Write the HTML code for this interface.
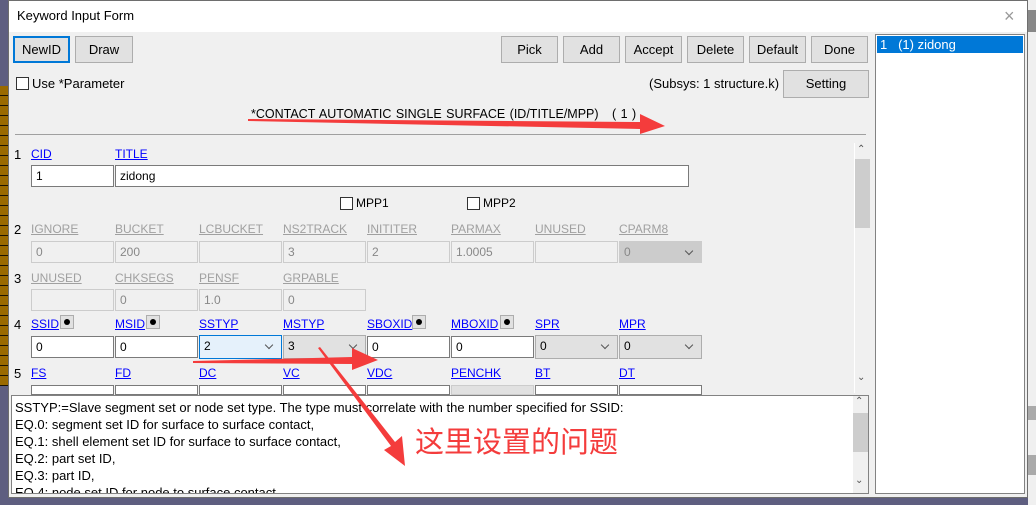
<!DOCTYPE html>
<html><head><meta charset="utf-8">
<style>
*{box-sizing:border-box;margin:0;padding:0}
body{width:1036px;height:505px;position:relative;overflow:hidden;background:#5e5e80;font-family:"Liberation Sans","Noto Sans CJK SC",sans-serif;font-size:12px;color:#000}
.a{position:absolute}
.win{left:8px;top:0;width:1020px;height:498px;background:#f0f0f0;border:1px solid #6e6e6e}
.btn{position:absolute;height:27px;background:#e1e1e1;border:1px solid #adadad;text-align:center;line-height:25px;font-size:13px}
.lbl{position:absolute;color:#0000ff;text-decoration:underline;font-size:12px}
.dis{color:#a0a0a0}
.inp{position:absolute;width:83px;height:22px;background:#fff;border:1px solid #7a7a7a;padding-left:4px;line-height:20px;font-size:12px}
.dinp{background:#f0f0f0;border-color:#ccc;color:#888}
.sel{position:absolute;width:83px;height:22px;background:#e1e1e1;border:1px solid #adadad;padding-left:4px;line-height:20px}
.sel:after{content:"";position:absolute;right:9px;top:6px;width:5px;height:5px;border-right:1px solid #555;border-bottom:1px solid #555;transform:rotate(45deg)}
.num{position:absolute;left:14px;font-size:13px}
.cb{position:absolute;width:13px;height:13px;border:1px solid #333;background:#fff}
.dot{position:absolute;width:14px;height:14px;background:#e1e1e1;border:1px solid #adadad}
.dot:after{content:"";position:absolute;left:3px;top:3px;width:6px;height:6px;border-radius:50%;background:#000}
.help div{height:17px;line-height:17px;font-size:13px;white-space:nowrap}
</style></head><body>
<div class="a" style="left:0;top:86px;width:8px;height:300px;background:repeating-linear-gradient(#9a6a00 0 9px,#1a1200 9px 10px)"></div>
<div class="a" style="left:1028px;top:0;width:8px;height:505px;background:#f0f0f0"></div>
<div class="a" style="left:1028px;top:10px;width:8px;height:22px;background:#888"></div>
<div class="a" style="left:1028px;top:406px;width:8px;height:14px;background:#aaa"></div>
<div class="a" style="left:1028px;top:455px;width:8px;height:20px;background:#aaa"></div>

<div class="a win">
 <div class="a" style="left:0;top:0;width:1018px;height:31px;background:#fff"></div>
 <div class="a" style="left:8px;top:7px;font-size:13px">Keyword Input Form</div>
 <div class="a" style="left:995px;top:5px;font-size:18px;color:#999">×</div>
</div>

<div class="btn" style="left:13px;top:36px;width:57px;border:2px solid #0078d7;line-height:23px">NewID</div>
<div class="btn" style="left:75px;top:36px;width:58px">Draw</div>
<div class="btn" style="left:501px;top:36px;width:57px">Pick</div>
<div class="btn" style="left:563px;top:36px;width:57px">Add</div>
<div class="btn" style="left:625px;top:36px;width:57px">Accept</div>
<div class="btn" style="left:687px;top:36px;width:57px">Delete</div>
<div class="btn" style="left:749px;top:36px;width:57px">Default</div>
<div class="btn" style="left:811px;top:36px;width:57px">Done</div>
<div class="btn" style="left:783px;top:70px;width:86px;height:28px;line-height:26px">Setting</div>
<div class="cb" style="left:16px;top:77px"></div>
<div class="a" style="left:32px;top:76px;font-size:13px">Use *Parameter</div>
<div class="a" style="left:649px;top:76px;font-size:13px">(Subsys: 1 structure.k)</div>
<div class="a" style="left:251px;top:107px;font-size:12.5px;word-spacing:1px">*CONTACT AUTOMATIC SINGLE SURFACE (ID/TITLE/MPP) &nbsp;&nbsp;( 1 )</div>
<div class="a" style="left:15px;top:134px;width:851px;height:1px;background:#a0a0a0"></div>

<div class="a" style="left:854px;top:143px;width:16px;height:250px;background:#f0f0f0;border-left:1px solid #fff"></div>
<div class="a" style="left:857px;top:144px;font-size:10px;color:#555">&#8963;</div>
<div class="a" style="left:855px;top:159px;width:15px;height:69px;background:#cdcdcd"></div>
<div class="a" style="left:857px;top:372px;font-size:10px;color:#555">&#8964;</div>

<div class="num" style="top:147px">1</div>
<div class="lbl" style="left:31px;top:147px">CID</div>
<div class="lbl" style="left:115px;top:147px">TITLE</div>
<div class="inp" style="left:31px;top:165px;width:83px;height:22px">1</div>
<div class="inp" style="left:115px;top:165px;width:574px;height:22px">zidong</div>
<div class="cb" style="left:340px;top:197px"></div><div class="a" style="left:356px;top:196px">MPP1</div>
<div class="cb" style="left:467px;top:197px"></div><div class="a" style="left:483px;top:196px">MPP2</div>

<div class="num" style="top:222px">2</div>
<div class="lbl dis" style="left:31px;top:222px">IGNORE</div>
<div class="lbl dis" style="left:115px;top:222px">BUCKET</div>
<div class="lbl dis" style="left:199px;top:222px">LCBUCKET</div>
<div class="lbl dis" style="left:283px;top:222px">NS2TRACK</div>
<div class="lbl dis" style="left:367px;top:222px">INITITER</div>
<div class="lbl dis" style="left:451px;top:222px">PARMAX</div>
<div class="lbl dis" style="left:535px;top:222px">UNUSED</div>
<div class="lbl dis" style="left:619px;top:222px">CPARM8</div>
<div class="inp dinp" style="left:31px;top:241px">0</div>
<div class="inp dinp" style="left:115px;top:241px">200</div>
<div class="inp dinp" style="left:199px;top:241px"></div>
<div class="inp dinp" style="left:283px;top:241px">3</div>
<div class="inp dinp" style="left:367px;top:241px">2</div>
<div class="inp dinp" style="left:451px;top:241px">1.0005</div>
<div class="inp dinp" style="left:535px;top:241px"></div>
<div class="sel" style="left:619px;top:241px;background:#ccc;border-color:#ccc;color:#888">0</div>

<div class="num" style="top:271px">3</div>
<div class="lbl dis" style="left:31px;top:271px">UNUSED</div>
<div class="lbl dis" style="left:115px;top:271px">CHKSEGS</div>
<div class="lbl dis" style="left:199px;top:271px">PENSF</div>
<div class="lbl dis" style="left:283px;top:271px">GRPABLE</div>
<div class="inp dinp" style="left:31px;top:289px"></div>
<div class="inp dinp" style="left:115px;top:289px">0</div>
<div class="inp dinp" style="left:199px;top:289px">1.0</div>
<div class="inp dinp" style="left:283px;top:289px">0</div>

<div class="num" style="top:317px">4</div>
<div class="lbl" style="left:31px;top:317px">SSID</div><div class="dot" style="left:60px;top:315px"></div>
<div class="lbl" style="left:115px;top:317px">MSID</div><div class="dot" style="left:146px;top:315px"></div>
<div class="lbl" style="left:199px;top:317px">SSTYP</div>
<div class="lbl" style="left:283px;top:317px">MSTYP</div>
<div class="lbl" style="left:367px;top:317px">SBOXID</div><div class="dot" style="left:412px;top:315px"></div>
<div class="lbl" style="left:451px;top:317px">MBOXID</div><div class="dot" style="left:500px;top:315px"></div>
<div class="lbl" style="left:535px;top:317px">SPR</div>
<div class="lbl" style="left:619px;top:317px">MPR</div>
<div class="inp" style="left:31px;top:336px">0</div>
<div class="inp" style="left:115px;top:336px">0</div>
<div class="sel" style="left:199px;top:335px;background:#e5f1fb;border-color:#0078d7;height:24px">2</div>
<div class="sel" style="left:283px;top:335px;height:24px">3</div>
<div class="inp" style="left:367px;top:336px">0</div>
<div class="inp" style="left:451px;top:336px">0</div>
<div class="sel" style="left:535px;top:335px;height:24px">0</div>
<div class="sel" style="left:619px;top:335px;height:24px">0</div>

<div class="num" style="top:366px">5</div>
<div class="lbl" style="left:31px;top:366px">FS</div>
<div class="lbl" style="left:115px;top:366px">FD</div>
<div class="lbl" style="left:199px;top:366px">DC</div>
<div class="lbl" style="left:283px;top:366px">VC</div>
<div class="lbl" style="left:367px;top:366px">VDC</div>
<div class="lbl" style="left:451px;top:366px">PENCHK</div>
<div class="lbl" style="left:535px;top:366px">BT</div>
<div class="lbl" style="left:619px;top:366px">DT</div>
<div class="inp" style="left:31px;top:385px;height:10px"></div>
<div class="inp" style="left:115px;top:385px;height:10px"></div>
<div class="inp" style="left:199px;top:385px;height:10px"></div>
<div class="inp" style="left:283px;top:385px;height:10px"></div>
<div class="inp" style="left:367px;top:385px;height:10px"></div>
<div class="inp" style="left:451px;top:385px;height:10px;background:#e1e1e1;border-color:#ccc"></div>
<div class="inp" style="left:535px;top:385px;height:10px"></div>
<div class="inp" style="left:619px;top:385px;height:10px"></div>

<div class="a help" style="left:11px;top:395px;width:858px;height:99px;background:#fff;border:1px solid #828282;padding:3px 0 0 3px;overflow:hidden">
 <div>SSTYP:=Slave segment set or node set type. The type must correlate with the number specified for SSID:</div>
 <div>EQ.0: segment set ID for surface to surface contact,</div>
 <div>EQ.1: shell element set ID for surface to surface contact,</div>
 <div>EQ.2: part set ID,</div>
 <div>EQ.3: part ID,</div>
 <div>EQ.4: node set ID for node to surface contact,</div>
</div>
<div class="a" style="left:853px;top:396px;width:15px;height:97px;background:#f0f0f0"></div>
<div class="a" style="left:855px;top:396px;font-size:10px;color:#555">&#8963;</div>
<div class="a" style="left:853px;top:413px;width:15px;height:39px;background:#cdcdcd"></div>
<div class="a" style="left:855px;top:475px;font-size:10px;color:#555">&#8964;</div>

<div class="a" style="left:875px;top:34px;width:150px;height:460px;background:#fff;border:1px solid #828282"></div>
<div class="a" style="left:877px;top:36px;width:146px;height:17px;background:#0078d7;color:#fff;font-size:13px;line-height:17px;padding-left:3px">1 &nbsp;&nbsp;(1) zidong</div>

<div class="a" style="left:415px;top:420px;font-size:29px;color:#f43c3c;font-family:'Noto Sans CJK SC',sans-serif;line-height:40px">这里设置的问题</div>
<svg class="a" style="left:0;top:0" width="1036" height="505">
 <polygon points="248,119 640,122 640,114 665,126 640,134 640,129 248,121" fill="#f43c3c"/>
 <polygon points="193,361 352,357 352,348 378,360 352,370 352,364 193,363" fill="#f43c3c"/>
 <polygon points="318,348 320,347 395,442 402,436 405,466 384,450 391,446" fill="#f43c3c"/>
</svg>
</body></html>
